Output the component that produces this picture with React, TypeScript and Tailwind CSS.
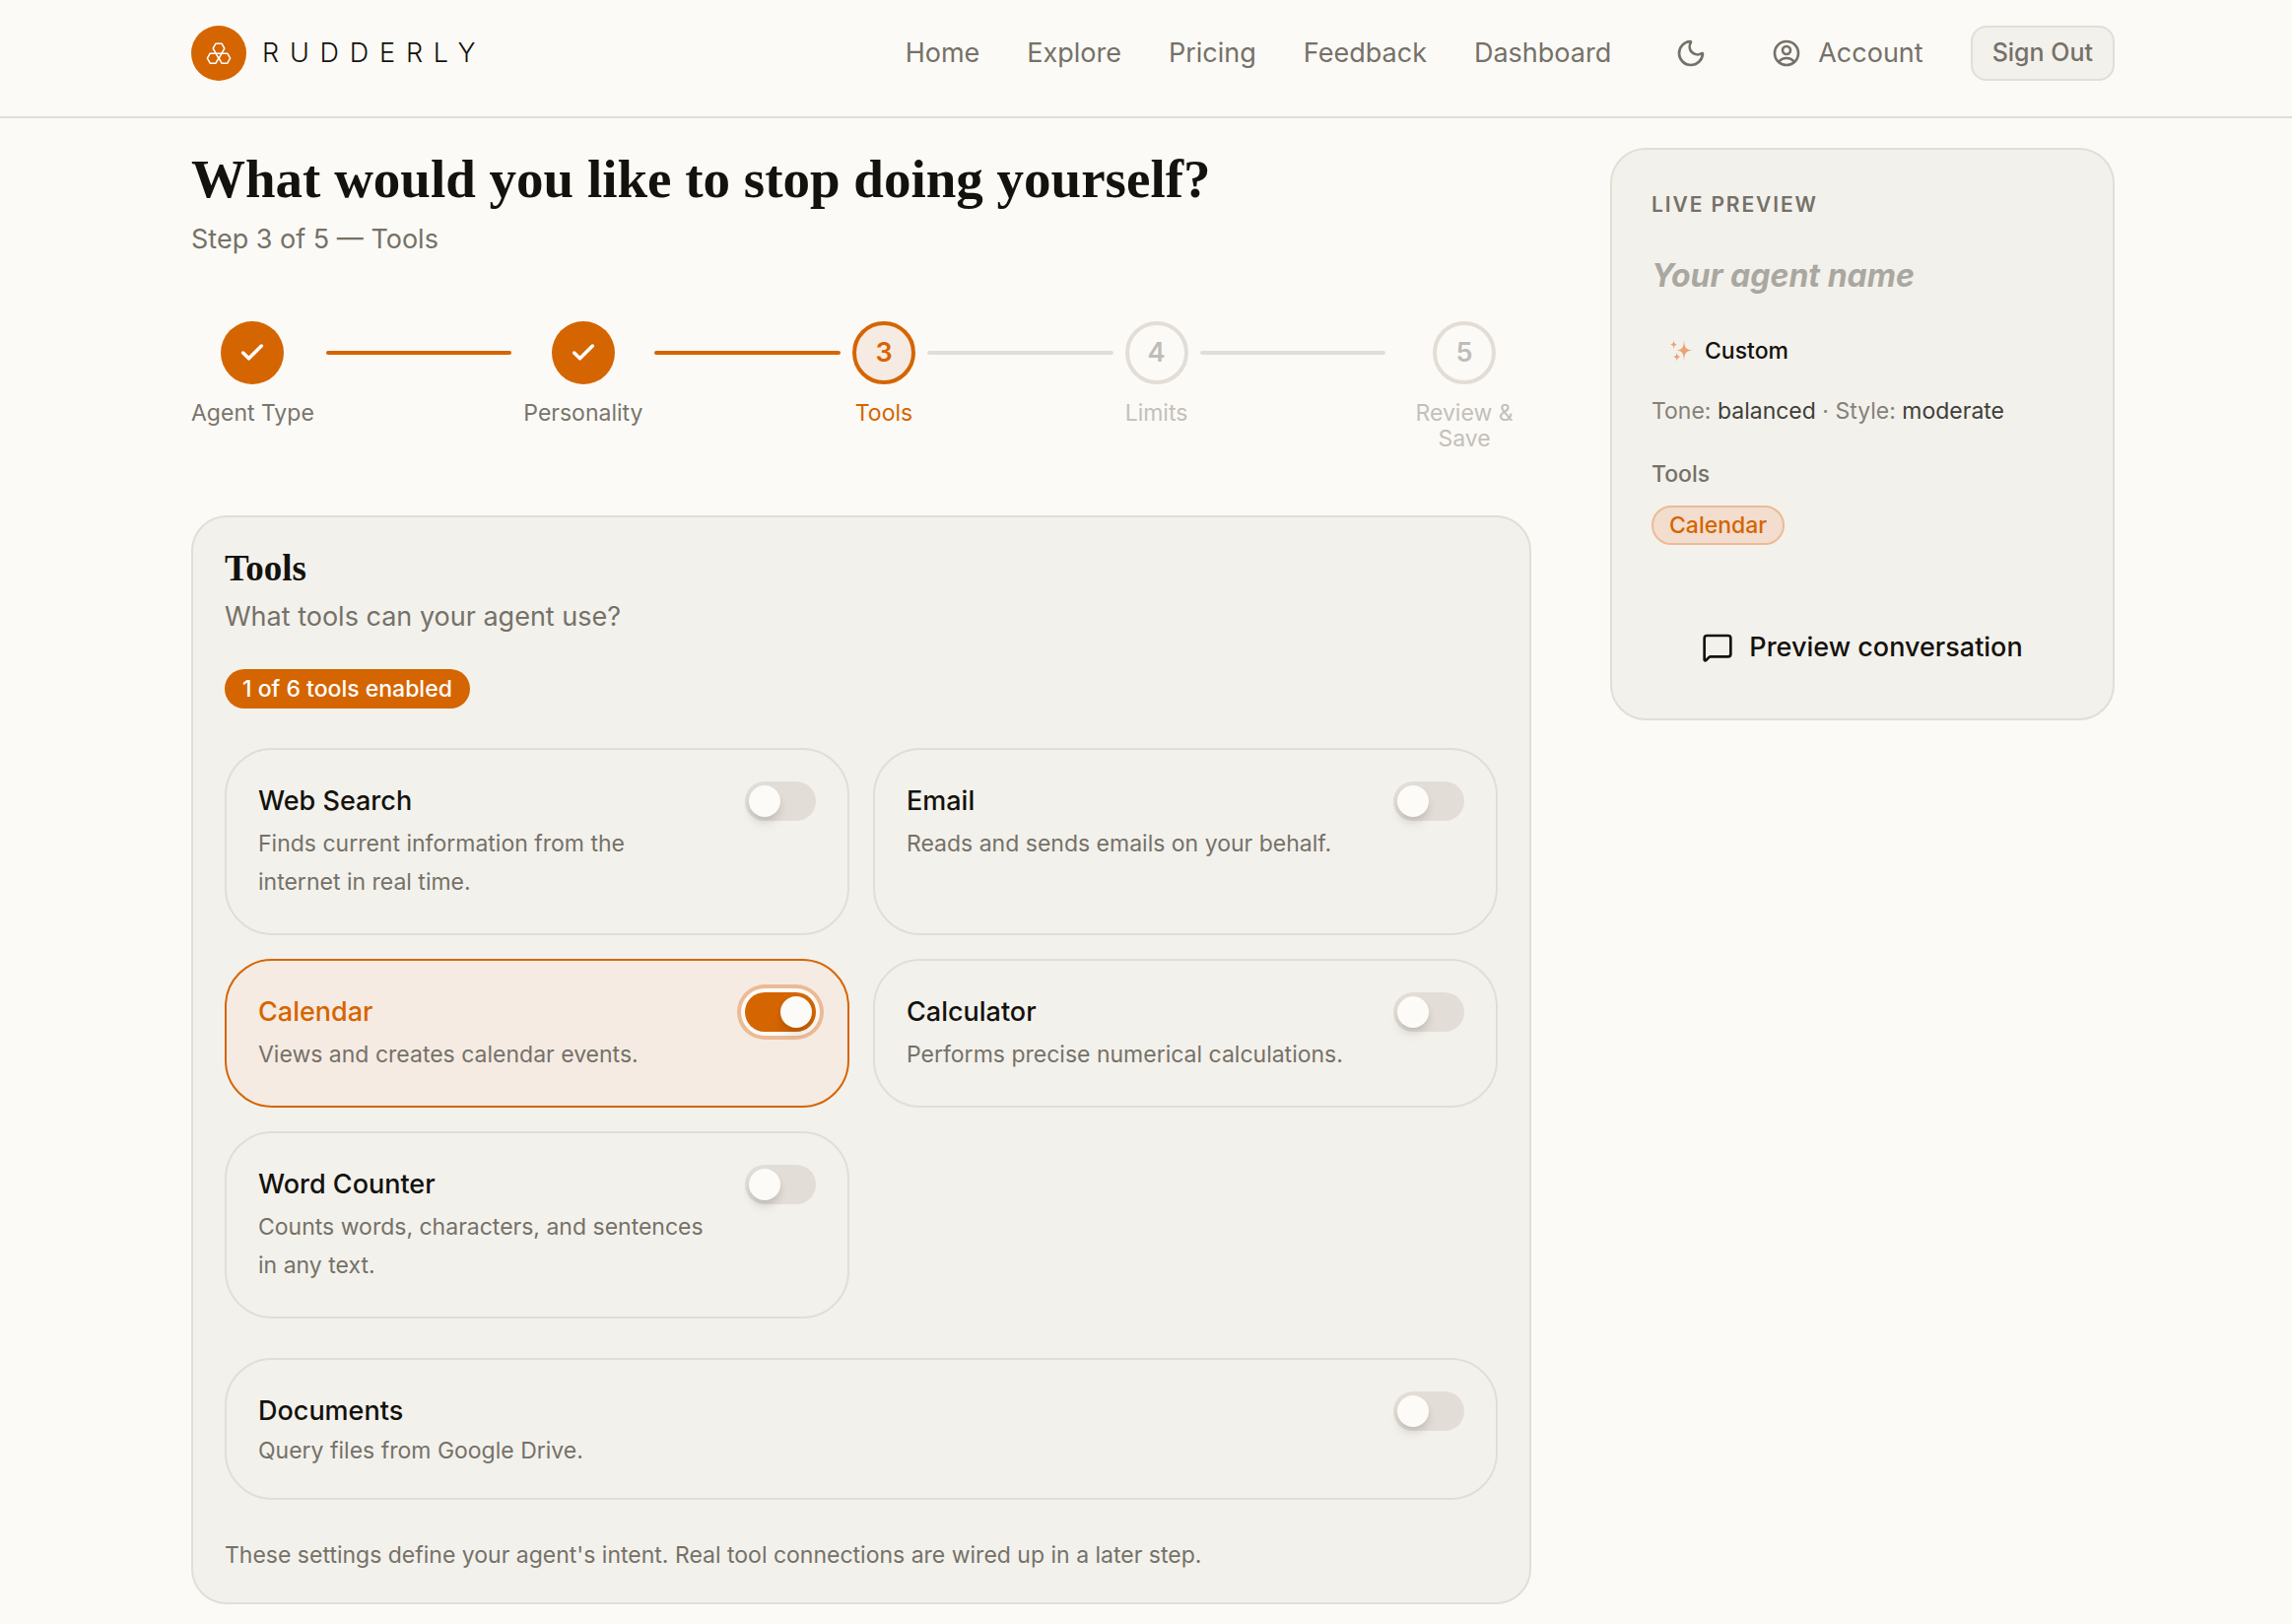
import React, { useState } from "react";
import { Check, MessageSquare, Moon } from "lucide-react";

const BORDER = "border-2 border-[#e3ddd7]";

function LogoMark() {
  return (
    <svg viewBox="0 0 28 28" className="size-7" fill="none" stroke="white" strokeWidth="1.5" strokeLinejoin="round" aria-hidden="true">
      <polygon points="11,4.2 17,4.2 19.8,9.2 17,14.2 11,14.2 8.2,9.2" />
      <polygon points="5.2,14.2 11,14.2 13.8,19.2 11,24.2 5.2,24.2 2.4,19.2" />
      <polygon points="17,14.2 22.8,14.2 25.6,19.2 22.8,24.2 17,24.2 14.2,19.2" />
    </svg>
  );
}

function UserCircle() {
  return (
    <svg viewBox="0 0 24 24" className="size-8" fill="none" stroke="currentColor" strokeWidth="2" strokeLinecap="round" strokeLinejoin="round" aria-hidden="true">
      <path d="M17.982 18.725A7.488 7.488 0 0 0 12 15.75a7.488 7.488 0 0 0-5.982 2.975m11.963 0a9 9 0 1 0-11.963 0m11.963 0A8.966 8.966 0 0 1 12 21a8.966 8.966 0 0 1-5.982-2.275M15 9.75a3 3 0 1 1-6 0 3 3 0 0 1 6 0Z" />
    </svg>
  );
}

function Sparkles() {
  return (
    <svg viewBox="0 0 24 24" className="size-6 shrink-0" fill="#eba173" aria-hidden="true">
      <path d="M15 1C15.5 9 16.8 10.7 24 11.5C16.8 12.3 15.5 14 15 22.5C14.5 14 13.2 12.3 7 11.5C13.2 10.7 14.5 9 15 1Z" />
      <path d="M4.6 1C5 4.1 5.6 5 8.2 5.6C5.6 6.2 5 7.1 4.6 10.2C4.2 7.1 3.6 6.2 1 5.6C3.6 5 4.2 4.1 4.6 1Z" />
      <path d="M7.8 13.4C8.2 16.5 8.8 17.3 11.6 18C8.8 18.7 8.2 19.5 7.8 22.8C7.4 19.5 6.8 18.7 4 18C6.8 17.3 7.4 16.5 7.8 13.4Z" />
    </svg>
  );
}

function Header() {
  return (
    <header className="flex items-center justify-between border-b-2 border-[#e3ddd7] pb-9 pl-[194px] pr-[180px] pt-[26px]">
      <a href="#" className="flex items-center gap-4 text-[#13120d]">
        <span className="flex size-14 items-center justify-center rounded-full bg-[#d56500]">
          <LogoMark />
        </span>
        <span className="text-[27px] font-light tracking-[0.4em]">RUDDERLY</span>
      </a>
      <nav className="flex items-center gap-12 text-[27px] text-[#757168]">
        {["Home", "Explore", "Pricing", "Feedback", "Dashboard"].map((item) => (
          <a key={item} href="#">{item}</a>
        ))}
        <button type="button" aria-label="Toggle dark mode" className="flex h-14 w-[66px] items-center justify-center">
          <Moon className="size-8" />
        </button>
        <a href="#" className="flex items-center gap-4">
          <UserCircle />
          Account
        </a>
        <button type="button" className={`${BORDER} h-14 rounded-2xl bg-[#f3f1ec] px-5 text-[25px] font-medium`}>
          Sign Out
        </button>
      </nav>
    </header>
  );
}

const STEPS = ["Agent Type", "Personality", "Tools", "Limits", "Review & Save"];
const CURRENT = 2;

function Stepper() {
  return (
    <ol className="flex items-start gap-3">
      {STEPS.map((label, i) => {
        const done = i < CURRENT;
        const active = i === CURRENT;
        const circle = done
          ? "bg-[#d56500] text-white"
          : active
            ? "border-4 border-[#d56500] bg-[#f5ebe3] text-[#d56500]"
            : "border-4 border-[#e3ddd7] text-[#c0bdb8]";
        const text = done ? "text-[#78756e]" : active ? "text-[#d56500]" : "text-[#c3c0bb]";
        const last = i === STEPS.length - 1;
        return (
          <React.Fragment key={label}>
            <li className={`flex flex-col items-center gap-4 ${last ? "w-[136px]" : ""}`} aria-current={active ? "step" : undefined}>
              <span className={`flex size-16 items-center justify-center rounded-full text-[27px] font-semibold ${circle}`}>
                {done ? <Check className="size-7" strokeWidth={3} /> : i + 1}
              </span>
              <span className={`text-center text-[23px] leading-[26px] ${text}`}>{label}</span>
            </li>
            {!last && (
              <li aria-hidden="true" className={`mt-[30px] h-1 flex-1 rounded-sm ${done ? "bg-[#d56500]" : "bg-[#e3ddd7]"}`} />
            )}
          </React.Fragment>
        );
      })}
    </ol>
  );
}

type Tool = { id: string; name: string; text: string };

const TOOLS: Tool[] = [
  { id: "web", name: "Web Search", text: "Finds current information from the internet in real time." },
  { id: "email", name: "Email", text: "Reads and sends emails on your behalf." },
  { id: "calendar", name: "Calendar", text: "Views and creates calendar events." },
  { id: "calculator", name: "Calculator", text: "Performs precise numerical calculations." },
  { id: "words", name: "Word Counter", text: "Counts words, characters, and sentences in any text." },
];
const DOCUMENTS: Tool = { id: "documents", name: "Documents", text: "Query files from Google Drive." };

type CardProps = { tool: Tool; on: boolean; onToggle: () => void; compact?: boolean };

function ToolCard({ tool, on, onToggle, compact }: CardProps) {
  return (
    <div className={`flex items-start justify-between gap-9 rounded-[48px] border-2 p-8 ${on ? "border-[#d56500] bg-[#f5ebe3]" : "border-[#e3ddd7]"}`}>
      <div>
        <label htmlFor={tool.id} className={`block text-[27px] font-medium leading-10 ${on ? "text-[#d56500]" : "text-[#13120d]"}`}>
          {tool.name}
        </label>
        <p id={`${tool.id}-text`} className={`mt-1 text-[23px] text-[#757168] ${compact ? "leading-8" : "leading-[39px]"}`}>
          {tool.text}
        </p>
      </div>
      <input
        id={tool.id}
        type="checkbox"
        role="switch"
        checked={on}
        onChange={onToggle}
        aria-describedby={`${tool.id}-text`}
        className="h-10 w-[72px] shrink-0 cursor-pointer appearance-none rounded-full bg-[#e3ddd7] p-1 outline-none before:block before:size-8 before:rounded-full before:bg-[#fcfbf7] before:shadow-[0_8px_12px_-2px_rgba(0,0,0,0.1),0_4px_8px_-2px_rgba(0,0,0,0.1)] checked:bg-[#d56500] checked:shadow-[0_0_0_4px_#fcfbf7,0_0_0_8px_#ecba95] checked:before:translate-x-8"
      />
    </div>
  );
}

function Preview() {
  return (
    <aside className={`${BORDER} self-start rounded-[36px] bg-[#f3f1ec] p-10 text-[23px] leading-8`}>
      <h2 className="text-[21px] font-semibold uppercase tracking-[0.09em] text-[#757168]">Live preview</h2>
      <p className="mt-8 text-[32px] font-bold italic leading-[48px] text-[#aaa7a0]">Your agent name</p>
      <p className="mt-8 flex h-10 items-center gap-3 px-[18px] font-medium text-[#13120d]">
        <Sparkles />
        Custom
      </p>
      <p className="mt-[25px] text-[#858179]">
        Tone: <span className="text-[#403e39]">balanced</span> · Style: <span className="text-[#403e39]">moderate</span>
      </p>
      <h3 className="mt-8 font-medium text-[#757168]">Tools</h3>
      <span className="mt-4 inline-flex h-10 items-center rounded-full border-2 border-[#ecba95] bg-[#f2ddce] px-4 font-medium text-[#d56500]">
        Calendar
      </span>
      <button type="button" className="mt-[72px] flex h-16 w-full items-center justify-center gap-4 text-[27px] font-medium text-[#13120d]">
        <MessageSquare className="size-8" />
        Preview conversation
      </button>
    </aside>
  );
}

export default function App() {
  const [enabled, setEnabled] = useState<string[]>(["calendar"]);
  const toggle = (id: string) =>
    setEnabled((list) => (list.includes(id) ? list.filter((x) => x !== id) : [...list, id]));

  return (
    <div className="min-h-screen bg-[#fcfaf6] font-['Inter',sans-serif]">
      <Header />
      <div className="grid grid-cols-[minmax(0,1fr)_512px] gap-20 pb-5 pl-[194px] pr-[180px] pt-[30px]">
        <main>
          <h1 className="font-['Liberation_Serif',serif] text-[55px] font-bold leading-[64px] text-[#13120d]">
            What would you like to stop doing yourself?
          </h1>
          <p className="mb-[62px] mt-2 text-[27px] leading-[42px] text-[#757168]">Step 3 of 5 — Tools</p>
          <Stepper />
          <section className={`${BORDER} mt-[65px] rounded-[36px] bg-[#f3f1ec] p-8`}>
            <h2 className="font-['Liberation_Serif',serif] text-[37px] font-bold leading-10 text-[#13120d]">Tools</h2>
            <p className="mt-2 text-[27px] leading-[42px] text-[#757168]">What tools can your agent use?</p>
            <p className="mt-8 flex h-10 w-fit items-center rounded-full bg-[#d56500] px-[18px] text-[23px] font-medium text-white">
              {enabled.length} of 6 tools enabled
            </p>
            <div className="mt-10 grid grid-cols-2 gap-6">
              {TOOLS.map((tool) => (
                <ToolCard key={tool.id} tool={tool} on={enabled.includes(tool.id)} onToggle={() => toggle(tool.id)} />
              ))}
            </div>
            <div className="mt-10">
              <ToolCard tool={DOCUMENTS} on={enabled.includes("documents")} onToggle={() => toggle("documents")} compact />
            </div>
            <p className="mt-10 text-[23px] leading-8 text-[#757168]">
              These settings define your agent's intent. Real tool connections are wired up in a later step.
            </p>
          </section>
        </main>
        <Preview />
      </div>
    </div>
  );
}
